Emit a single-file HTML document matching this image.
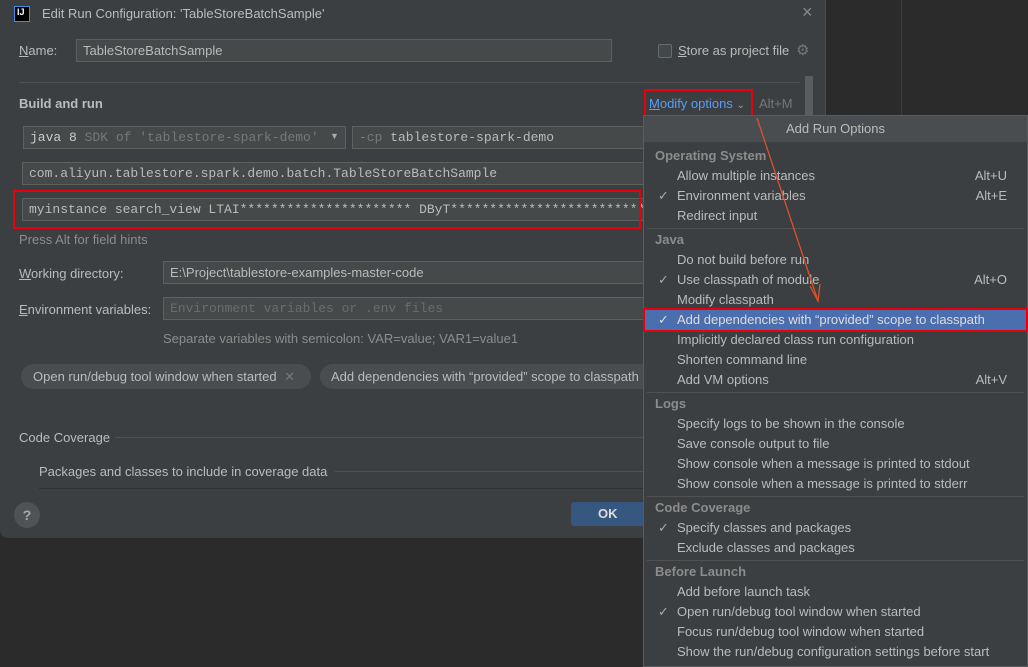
<!DOCTYPE html>
<html><head><meta charset="utf-8"><style>
*{margin:0;padding:0;box-sizing:border-box}
body{width:1028px;height:667px;background:#2b2b2b;position:relative;overflow:hidden;font-family:"Liberation Sans",sans-serif;font-size:13px;color:#bbbbbb}
.a{position:absolute;white-space:nowrap}
.dlg{position:absolute;left:0;top:0;width:826px;height:538px;background:#3c3f41;border-radius:0 0 8px 8px;border-right:1px solid #4a4d4f}
.in{position:absolute;background:#45494a;border:1px solid #5e6060;height:23px;line-height:21px;padding-left:6px;color:#bbb;overflow:hidden}
.mono{font-family:"Liberation Mono",monospace;font-size:13px}
.red{position:absolute;border:2px solid #e8000b}
.line{position:absolute;height:1px;background:#515151}
.pop{position:absolute;left:643px;top:115px;width:385px;height:552px;background:#3c3f41;border:1px solid #5a5d5f}
.pop .h{position:absolute;left:11px;font-weight:bold;color:#8c8c8c}
.pop .i{position:absolute;left:33px;color:#bbbbbb}
.pop .k{position:absolute;right:20px;color:#bbbbbb}
.pop .c{position:absolute;left:14px;color:#aaa}
.pop .s{position:absolute;left:3px;right:3px;height:1px;background:#515151}
.u{text-decoration:underline}
</style></head><body>
<div class="a" style="left:901px;top:0;width:1px;height:115px;background:#3e3e3e"></div>
<div class="dlg">
 <div class="a" style="left:14px;top:6px;width:16px;height:16px;background:#000;border:1px solid #3c8ee6;color:#fff;font-size:9px;font-weight:bold;line-height:11px;padding-left:2px">IJ</div>
 <div class="a" style="left:42px;top:6px;font-size:13px;color:#bbb">Edit Run Configuration: 'TableStoreBatchSample'</div>
 <div class="a" style="left:802px;top:2px;font-size:18px;color:#8a8a8a">×</div>
 <div class="a" style="left:19px;top:43px"><span class="u">N</span>ame:</div>
 <div class="in" style="left:76px;top:39px;width:536px;">TableStoreBatchSample</div>
 <div class="a" style="left:658px;top:44px;width:14px;height:14px;border:1px solid #6b6b6b;border-radius:2px;background:#43494a"></div>
 <div class="a" style="left:678px;top:43px"><span class="u">S</span>tore as project file</div>
 <div class="a" style="left:796px;top:41px;color:#777;font-size:15px">⚙</div>
 <div class="line" style="left:19px;top:82px;width:781px"></div>
 <div class="a" style="left:805px;top:76px;width:8px;height:110px;background:#5a5d5f"></div>
 <div class="a" style="left:19px;top:96px;font-weight:bold">Build and run</div>
 <div class="a" style="left:649px;top:96px;color:#589df6"><span class="u">M</span>odify options <span style="font-size:10px;color:#999">⌄</span></div>
 <div class="red" style="left:644px;top:89px;width:109px;height:28px"></div>
 <div class="a" style="left:759px;top:96px;color:#777">Alt+M</div>
 <div class="in mono" style="left:23px;top:126px;width:323px;"><span style="color:#ccc">java 8</span> <span style="color:#787878">SDK of 'tablestore-spark-demo' modu</span></div>
 <div class="a" style="left:330px;top:131px;width:14px;height:14px;background:#45494a;color:#aaa;font-size:9px">▼</div>
 <div class="in mono" style="left:352px;top:126px;width:300px;"><span style="color:#787878">-cp</span> tablestore-spark-demo</div>
 <div class="in mono" style="left:22px;top:162px;width:630px;">com.aliyun.tablestore.spark.demo.batch.TableStoreBatchSample</div>
 <div class="in mono" style="left:22px;top:198px;width:630px;">myinstance search_view LTAI********************** DByT************************* https:/</div>
 <div class="red" style="left:13px;top:190px;width:628px;height:39px"></div>
 <div class="a" style="left:19px;top:232px;color:#8c8c8c">Press Alt for field hints</div>
 <div class="a" style="left:19px;top:266px"><span class="u">W</span>orking directory:</div>
 <div class="in" style="left:163px;top:261px;width:490px;">E:\Project\tablestore-examples-master-code</div>
 <div class="a" style="left:19px;top:302px"><span class="u">E</span>nvironment variables:</div>
 <div class="in mono" style="left:163px;top:297px;width:490px;color:#6c6c6c">Environment variables or .env files</div>
 <div class="a" style="left:163px;top:331px;color:#8c8c8c">Separate variables with semicolon: VAR=value; VAR1=value1</div>
 <div class="a" style="left:21px;top:364px;width:290px;height:25px;border-radius:13px;background:#4a4d50;padding:5px 0 0 12px">Open run/debug tool window when started <span style="color:#777;margin-left:4px">✕</span></div>
 <div class="a" style="left:320px;top:364px;width:340px;height:25px;border-radius:13px;background:#4a4d50;padding:5px 0 0 11px">Add dependencies with “provided” scope to classpath</div>
 <div class="a" style="left:19px;top:430px">Code Coverage</div>
 <div class="line" style="left:115px;top:437px;width:530px"></div>
 <div class="a" style="left:39px;top:464px">Packages and classes to include in coverage data</div>
 <div class="line" style="left:335px;top:471px;width:310px"></div>
 <div class="line" style="left:39px;top:488px;width:605px;background:#2f3133"></div>
 <div class="a" style="left:14px;top:502px;width:26px;height:26px;border-radius:50%;background:#505356;color:#aaa;font-weight:bold;text-align:center;line-height:26px;font-size:14px">?</div>
 <div class="a" style="left:571px;top:502px;width:75px;height:24px;border-radius:3px;background:#365880;color:#ddd;font-weight:bold;line-height:24px;padding-left:27px">OK</div>
</div>
<div class="pop">
 <div class="a" style="left:0;top:0;width:383px;height:26px;background:#4a4d50;text-align:center;line-height:26px">Add Run Options</div>
 <div class="h" style="top:32px">Operating System</div>
 <div class="i" style="top:52px">Allow multiple instances</div><div class="k" style="top:52px">Alt+U</div>
 <div class="c" style="top:72px">✓</div><div class="i" style="top:72px">Environment variables</div><div class="k" style="top:72px">Alt+E</div>
 <div class="i" style="top:92px">Redirect input</div>
 <div class="s" style="top:112px"></div>
 <div class="h" style="top:116px">Java</div>
 <div class="i" style="top:136px">Do not build before run</div>
 <div class="c" style="top:156px">✓</div><div class="i" style="top:156px">Use classpath of module</div><div class="k" style="top:156px">Alt+O</div>
 <div class="i" style="top:176px">Modify classpath</div>
 <div class="a" style="left:0;top:193px;width:383px;height:21px;background:#4b6eaf"></div>
 <div class="red" style="left:-1px;top:192px;width:385px;height:24px"></div>
 <div class="c" style="top:196px;color:#ddd">✓</div><div class="i" style="top:196px;color:#ddd">Add dependencies with “provided” scope to classpath</div>
 <div class="i" style="top:216px">Implicitly declared class run configuration</div>
 <div class="i" style="top:236px">Shorten command line</div>
 <div class="i" style="top:256px">Add VM options</div><div class="k" style="top:256px">Alt+V</div>
 <div class="s" style="top:276px"></div>
 <div class="h" style="top:280px">Logs</div>
 <div class="i" style="top:300px">Specify logs to be shown in the console</div>
 <div class="i" style="top:320px">Save console output to file</div>
 <div class="i" style="top:340px">Show console when a message is printed to stdout</div>
 <div class="i" style="top:360px">Show console when a message is printed to stderr</div>
 <div class="s" style="top:380px"></div>
 <div class="h" style="top:384px">Code Coverage</div>
 <div class="c" style="top:404px">✓</div><div class="i" style="top:404px">Specify classes and packages</div>
 <div class="i" style="top:424px">Exclude classes and packages</div>
 <div class="s" style="top:444px"></div>
 <div class="h" style="top:448px">Before Launch</div>
 <div class="i" style="top:468px">Add before launch task</div>
 <div class="c" style="top:488px">✓</div><div class="i" style="top:488px">Open run/debug tool window when started</div>
 <div class="i" style="top:508px">Focus run/debug tool window when started</div>
 <div class="i" style="top:528px">Show the run/debug configuration settings before start</div>
</div>
<svg class="a" style="left:0;top:0" width="1028" height="667"><line x1="757" y1="118" x2="817" y2="298" stroke="#e0502a" stroke-width="1.3"/><polyline points="810,286 818,301 820,284" fill="none" stroke="#e0502a" stroke-width="1.3"/></svg>
</body></html>
